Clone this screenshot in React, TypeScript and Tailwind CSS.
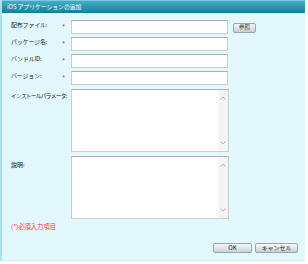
import React from "react";

const font = { fontFamily: '"Noto Sans CJK JP", "Noto Sans", sans-serif' };

function Label({ text, req }: { text: string; req?: boolean }) {
  return (
    <>
      <div className="w-[50px] text-[6px] leading-[8px] text-[#222] pt-[1px] whitespace-nowrap tracking-[-0.2px]">{text}</div>
      <div className="w-[10px] text-[7.5px] leading-[8px] text-[#ff2020] pt-[3px] pl-[1px]">{req ? "*" : ""}</div>
    </>
  );
}

function Input() {
  return <div className="w-[157px] h-[14px] bg-white border border-[#cdcdcd] border-t-[#b0b0b0]" />;
}

function TextArea() {
  return (
    <div className="w-[158px] h-[63px] bg-white border border-[#cdcdcd] border-t-[#b0b0b0] flex justify-end">
      <div className="w-[10px] h-full bg-[#f4f4f4] flex flex-col items-center justify-between py-[6px]">
        <svg width="6" height="4" viewBox="0 0 6 4"><path d="M0.5 3.5 L3 1 L5.5 3.5" fill="none" stroke="#a9a9a9" strokeWidth="0.9" /></svg>
        <svg width="6" height="4" viewBox="0 0 6 4"><path d="M0.5 0.5 L3 3 L5.5 0.5" fill="none" stroke="#a9a9a9" strokeWidth="0.9" /></svg>
      </div>
    </div>
  );
}

function Btn({ text, w }: { text: string; w: string }) {
  return (
    <div className={`${w} h-[10px] rounded-[2px] border border-[#9aa6ad] bg-gradient-to-b from-[#f7f9fa] to-[#c9d3d8] flex items-center justify-center text-[6px] leading-none text-[#222]`}>
      {text}
    </div>
  );
}

export default function App() {
  return (
    <div className="w-[308px] h-[264px] bg-white" style={font}>
      <div className="w-[305px] h-[261px] bg-[#e2f8fd] border-l-2 border-[#a9e2ef] border-b border-b-[#c9eef6] flex flex-col">
        <div className="h-[13px] bg-gradient-to-b from-[#46aec6] to-[#157d99] text-white text-[5.8px] leading-none pl-[5px] flex items-center border-t border-[#7ccbdc]">
          iOS アプリケーションの追加
        </div>
        <div className="flex flex-col pl-[9px] pt-[7px]">
          <div className="flex items-start">
            <Label text="配布ファイル:" req />
            <Input />
            <div className="ml-[5px] mt-[3px]">
              <div className="w-[23px] h-[10px] rounded-[2px] border border-[#9aa6ad] bg-gradient-to-b from-[#f2f5f7] to-[#c6d0d6] flex items-center justify-center text-[5.5px] leading-none text-[#333]">参照</div>
            </div>
          </div>
          <div className="flex items-start mt-[3px]">
            <Label text="パッケージ名:" req />
            <Input />
          </div>
          <div className="flex items-start mt-[3px]">
            <Label text="バンドルID:" req />
            <Input />
          </div>
          <div className="flex items-start mt-[3px]">
            <Label text="バージョン:" req />
            <Input />
          </div>
          <div className="flex items-start mt-[4px]">
            <div className="w-[60px] text-[5.6px] leading-[8px] text-[#222] pt-[3px] whitespace-nowrap tracking-[-0.6px]">インストールパラメータ:</div>
            <TextArea />
          </div>
          <div className="flex items-start mt-[4px]">
            <div className="w-[60px] text-[6px] leading-[8px] text-[#222] pt-[5px]">説明:</div>
            <TextArea />
          </div>
          <div className="mt-[4px] text-[6.3px] leading-[8px] text-[#ff3030]">(*)必須入力項目</div>
          <div className="flex justify-end gap-[3px] mt-[12px] pr-[7px]">
            <Btn text="OK" w="w-[39px]" />
            <Btn text="キャンセル" w="w-[43px]" />
          </div>
        </div>
      </div>
    </div>
  );
}
